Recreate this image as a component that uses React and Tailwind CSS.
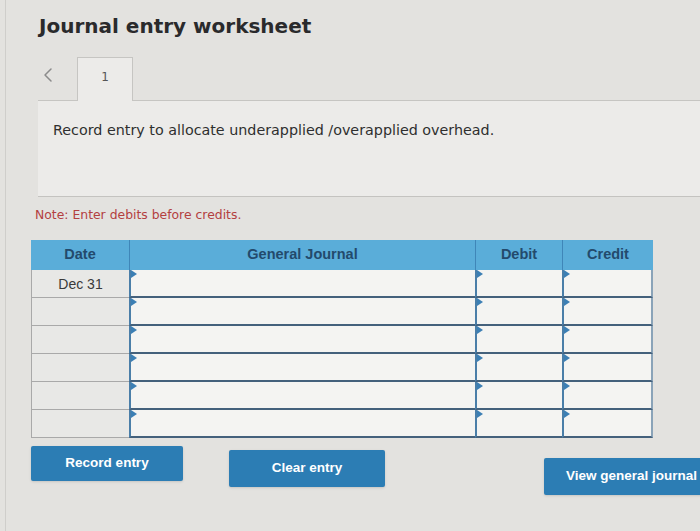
import { ChevronLeft } from "lucide-react";

const rows = ["Dec 31", "", "", "", "", ""];

function Flag() {
    return (
        <span className="absolute left-0 top-0 h-0 w-0 border-y-[4px] border-l-[6px] border-y-transparent border-l-[#3c7fb4]" />
    );
}

function InputCell({ width }) {
    return (
        <div className={`relative h-full ${width} border-b-2 border-l-2 border-b-[#44617c] border-l-[#4a7ea8] bg-[#f4f4f2]`}>
            <Flag />
        </div>
    );
}

export default function App() {
    return (
        <div className="w-[700px] h-[531px] overflow-hidden bg-[#e3e2df] font-['DejaVu_Sans',sans-serif]">
            <div className="h-full ml-[5px] border-l border-[#cfcecb] flex flex-col">
                <h1 className="ml-[33px] mt-[14px] text-[20px] leading-[24px] font-bold text-[#2a2a2c]">
                    Journal entry worksheet
                </h1>

                {/* tab strip */}
                <div className="ml-[32px] mt-[19px] flex h-[44px]">
                    <div className="w-[39px] border-b border-[#c6c5c2] flex items-start pt-[6px] text-[#8b8b8b]">
                        <ChevronLeft size={24} strokeWidth={1.5} className="-ml-[2px]" />
                    </div>
                    <div className="w-[56px] border border-b-0 border-[#c6c5c2] bg-[#ecebe9] flex justify-center pt-[10px] text-[12px] text-[#555]">
                        1
                    </div>
                    <div className="flex-1 border-b border-[#c6c5c2]" />
                </div>

                <div className="ml-[32px] h-[96px] bg-[#ecebe9] border-b border-[#c4c3c0] pl-[15px] pt-[19px] text-[14.3px] text-[#2f2f2f]">
                    Record entry to allocate underapplied /overapplied overhead.
                </div>

                <p className="ml-[29px] mt-[9px] text-[12.4px] text-[#b3403f]">
                    Note: Enter debits before credits.
                </p>

                {/* journal table */}
                <div className="ml-[25px] mt-[15px] w-[622px] font-['Liberation_Sans',Arial,sans-serif]">
                    <div className="flex h-[30px] bg-[#5aadd9] text-[14.5px] text-[#234a6c] font-semibold">
                        <div className="w-[98px] flex items-center justify-center">Date</div>
                        <div className="w-[346px] flex items-center justify-center border-l border-[#3f86b8]">General Journal</div>
                        <div className="w-[87px] flex items-center justify-center border-l border-[#3f86b8]">Debit</div>
                        <div className="w-[91px] flex items-center justify-center border-l border-[#3f86b8]">Credit</div>
                    </div>
                    {rows.map((d, i) => (
                        <div key={i} className="flex h-[28px]">
                            <div className="w-[98px] h-full border-b border-l border-[#a9a9a9] bg-[#e8e8e6] flex items-start justify-center pt-[4px] text-[14px] text-[#3a3a3a]">
                                {d}
                            </div>
                            <InputCell width="w-[346px]" />
                            <InputCell width="w-[87px]" />
                            <div className="relative h-full w-[91px] border-b-2 border-x-2 border-b-[#44617c] border-l-[#4a7ea8] border-r-[#8aa3b8] bg-[#f4f4f2]">
                                <Flag />
                            </div>
                        </div>
                    ))}
                </div>

                {/* actions */}
                <div className="ml-[25px] flex items-start font-['Liberation_Sans',Arial,sans-serif] text-[13.5px] font-bold text-white">
                    <button className="shrink-0 mt-[8px] w-[152px] h-[35px] bg-[#2c7db4] rounded-[2px] shadow-sm">Record entry</button>
                    <button className="shrink-0 ml-[46px] mt-[12px] w-[156px] h-[37px] bg-[#2c7db4] rounded-[2px] shadow-sm">Clear entry</button>
                    <button className="shrink-0 ml-[159px] mt-[20px] w-[170px] h-[37px] bg-[#2c7db4] rounded-[2px] shadow-sm text-left pl-[22px] whitespace-nowrap">
                        View general journal
                    </button>
                </div>
            </div>
        </div>
    );
}
